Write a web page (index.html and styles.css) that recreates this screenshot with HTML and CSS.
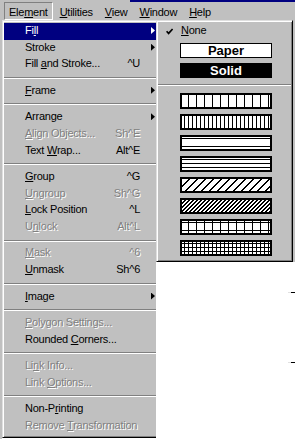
FILE: index.html
```html
<!DOCTYPE html>
<html lang="en">
  <head>
    <meta charset="UTF-8" />
    <title>Element menu</title>
    <link rel="stylesheet" href="styles.css">
  </head>
  <body>
    <div class="window">
      <!-- Menu bar -->
      <nav class="menubar">
        <span class="menubar-item open">Ele<u>m</u>ent</span>
        <span class="menubar-item"><u>U</u>tilities</span>
        <span class="menubar-item"><u>V</u>iew</span>
        <span class="menubar-item"><u>W</u>indow</span>
        <span class="menubar-item"><u>H</u>elp</span>
      </nav>

      <div class="work">
        <!-- Element menu -->
        <ul class="menu main-menu">
          <li class="item active"><span>Fi<u>l</u>l</span><span class="key"></span><span class="arrow"></span></li>
          <li class="item"><span>Stroke</span><span class="key"></span><span class="arrow"></span></li>
          <li class="item"><span>Fill <u>a</u>nd Stroke...</span><span class="key">^U</span><span></span></li>
          <li class="sep"></li>
          <li class="item"><span><u>F</u>rame</span><span class="key"></span><span class="arrow"></span></li>
          <li class="sep"></li>
          <li class="item"><span>Arrange</span><span class="key"></span><span class="arrow"></span></li>
          <li class="item off"><span><u>A</u>lign Objects...</span><span class="key">Sh^E</span><span></span></li>
          <li class="item"><span>Text <u>W</u>rap...</span><span class="key">Alt^E</span><span></span></li>
          <li class="sep"></li>
          <li class="item"><span><u>G</u>roup</span><span class="key">^G</span><span></span></li>
          <li class="item off"><span><u>U</u>ngroup</span><span class="key">Sh^G</span><span></span></li>
          <li class="item"><span><u>L</u>ock Position</span><span class="key">^L</span><span></span></li>
          <li class="item off"><span>U<u>n</u>lock</span><span class="key">Alt^L</span><span></span></li>
          <li class="sep"></li>
          <li class="item off"><span><u>M</u>ask</span><span class="key">^6</span><span></span></li>
          <li class="item"><span><u>U</u>nmask</span><span class="key">Sh^6</span><span></span></li>
          <li class="sep"></li>
          <li class="item"><span><u>I</u>mage</span><span class="key"></span><span class="arrow"></span></li>
          <li class="sep"></li>
          <li class="item off"><span><u>P</u>olygon Settings...</span><span class="key"></span><span></span></li>
          <li class="item"><span>Rounded <u>C</u>orners...</span><span class="key"></span><span></span></li>
          <li class="sep"></li>
          <li class="item off"><span>Li<u>n</u>k Info...</span><span class="key"></span><span></span></li>
          <li class="item off"><span>Link <u>O</u>ptions...</span><span class="key"></span><span></span></li>
          <li class="sep"></li>
          <li class="item"><span>Non-P<u>r</u>inting</span><span class="key"></span><span></span></li>
          <li class="item off"><span>Remove <u>T</u>ransformation</span><span class="key"></span><span></span></li>
        </ul>

        <div class="side">
          <!-- Fill submenu -->
          <div class="menu submenu">
            <div class="check-row">
              <svg class="check" width="7" height="7" viewBox="0 0 7 7">
                <path d="M0.6 3.2 L2.6 5.4 L6.6 1" fill="none" stroke="#000" stroke-width="1.7" />
              </svg>
              <span><u>N</u>one</span>
            </div>
            <div class="fill-btn paper">Paper</div>
            <div class="fill-btn solid">Solid</div>
            <div class="sub-sep"></div>
            <div class="swatch vlines"></div>
            <div class="swatch vlines-fine"></div>
            <div class="swatch hlines"></div>
            <div class="swatch hlines-fine"></div>
            <div class="swatch diag"></div>
            <div class="swatch diag-fine"></div>
            <div class="swatch grid"></div>
            <div class="swatch grid-fine"></div>
          </div>

          <!-- document behind the menus -->
          <div class="page">
            <i class="tick t1"></i>
            <i class="tick t2"></i>
          </div>
        </div>
      </div>
    </div>
  </body>
</html>
```

FILE: styles.css
```css
* {
  margin: 0;
  padding: 0;
  box-sizing: border-box;
}

body {
  font-family: 'Liberation Sans', Arial, sans-serif;
  font-size: 11px;
  letter-spacing: -0.25px;
  color: #000;
  background: #fff;
}

.window {
  width: 295px;
  height: 439px;
  overflow: hidden;
  display: flex;
  flex-direction: column;
}

/* Menu bar */
.menubar {
  height: 20px;
  flex: none;
  display: flex;
  align-items: flex-start;
  padding: 2px 0 0 4px;
  background: linear-gradient(#000080, #000080) 130px 0 / 100% 2px no-repeat,
    #c0c0c0;
}

.menubar-item {
  height: 18px;
  padding: 2px 4px 0;
  margin-right: 2px;
  line-height: 14px;
  border: 1px solid transparent;
}

.menubar-item.open {
  border-color: #808080 #fff #fff #808080;
}

.work {
  flex: 1;
  min-height: 0;
  display: flex;
  align-items: flex-start;
  padding-left: 2px;
  background: linear-gradient(#c0c0c0, #c0c0c0) 0 0 / 2px 100% no-repeat, #fff;
}

/* Menus */
.menu {
  background: #c0c0c0;
  border: 1px solid;
  border-color: #dfdfdf #000 #000 #dfdfdf;
  box-shadow: inset 1px 1px #fff, inset -1px -1px #808080;
  list-style: none;
}

.main-menu {
  width: 160px;
  flex: none;
  padding: 2px 1px;
}

.item {
  display: grid;
  grid-template-columns: 1fr auto 20px;
  height: 16.67px;
  line-height: 15px;
  padding-left: 21px;
  white-space: nowrap;
}

.item.active {
  background: #000080;
  color: #fff;
}

.item.off {
  color: #808080;
  text-shadow: 1px 1px 0 #fff;
}

.arrow {
  width: 4px;
  height: 7px;
  margin: 4px 0 0 11px;
  background: currentColor;
  clip-path: polygon(0 0, 100% 50%, 0 100%);
}

.sep {
  height: 2px;
  margin: 4px 1px 3.8px 0;
  border-top: 1px solid #808080;
  border-bottom: 1px solid #fff;
}

/* Fill submenu + page */
.side {
  width: 139px;
  flex: none;
  align-self: stretch;
  margin-left: -6px;
  display: flex;
  flex-direction: column;
  position: relative;
  z-index: 1;
}

.submenu {
  width: 137px;
  padding: 2px 1px 5px;
  box-shadow: inset 1px 1px #fff, inset -1px -1px #808080, 2px 0 0 #c0c0c0;
}

.check-row {
  display: grid;
  grid-template-columns: 23px 1fr;
  height: 16.67px;
  line-height: 15px;
}

.check {
  margin: 5px 0 0 8px;
}

.fill-btn {
  width: 92px;
  height: 15px;
  margin-left: 22px;
  border: 1px solid #000;
  font-weight: bold;
  font-size: 13px;
  line-height: 13px;
  letter-spacing: 0;
  text-align: center;
}

.paper {
  margin-top: 3px;
  background: #fff;
}

.solid {
  margin-top: 5px;
  background: #000;
  color: #fff;
}

.sub-sep {
  height: 2px;
  margin: 6px 0 7px;
  border-top: 1px solid #808080;
  border-bottom: 1px solid #fff;
}

.swatch {
  width: 92px;
  height: 16px;
  margin-left: 22px;
  border: 2px solid #000;
  background-color: #fff;
}

.swatch + .swatch {
  margin-top: 5px;
}

.vlines {
  background-image: repeating-linear-gradient(90deg, #fff 0 6px, #000 6px 7px, #fff 7px 8px);
}
.vlines-fine {
  background-image: repeating-linear-gradient(90deg, #fff 0 2px, #000 2px 3px, #fff 3px 4px);
}
.hlines {
  background-image: repeating-linear-gradient(180deg, #fff 0 1px, #000 1px 2px, #fff 2px 8px);
}
.hlines-fine {
  background-image: repeating-linear-gradient(180deg, #fff 0 1px, #000 1px 2px, #fff 2px 4px);
}
.diag {
  background-image: repeating-linear-gradient(135deg, #fff 0 4.66px, #000 4.66px 5.66px);
}
.diag-fine {
  background-image: repeating-linear-gradient(135deg, #fff 0 1.83px, #000 1.83px 2.83px);
}
.grid {
  background-image: repeating-linear-gradient(90deg, transparent 0 6px, #000 6px 7px, transparent 7px 8px),
    repeating-linear-gradient(180deg, transparent 0 1px, #000 1px 2px, transparent 2px 8px);
}
.grid-fine {
  background-image: repeating-linear-gradient(90deg, transparent 0 2px, #000 2px 3px, transparent 3px 4px),
    repeating-linear-gradient(180deg, transparent 0 1px, #000 1px 2px, transparent 2px 4px);
}

.page {
  flex: 1;
  position: relative;
  background: #fff;
}

.tick {
  position: absolute;
  left: 135px;
  width: 4px;
  height: 1px;
  background: #000;
  box-shadow: -3px 0 0 #e0e0e0;
}
.t1 {
  top: 30px;
}
.t2 {
  top: 100px;
}
```
